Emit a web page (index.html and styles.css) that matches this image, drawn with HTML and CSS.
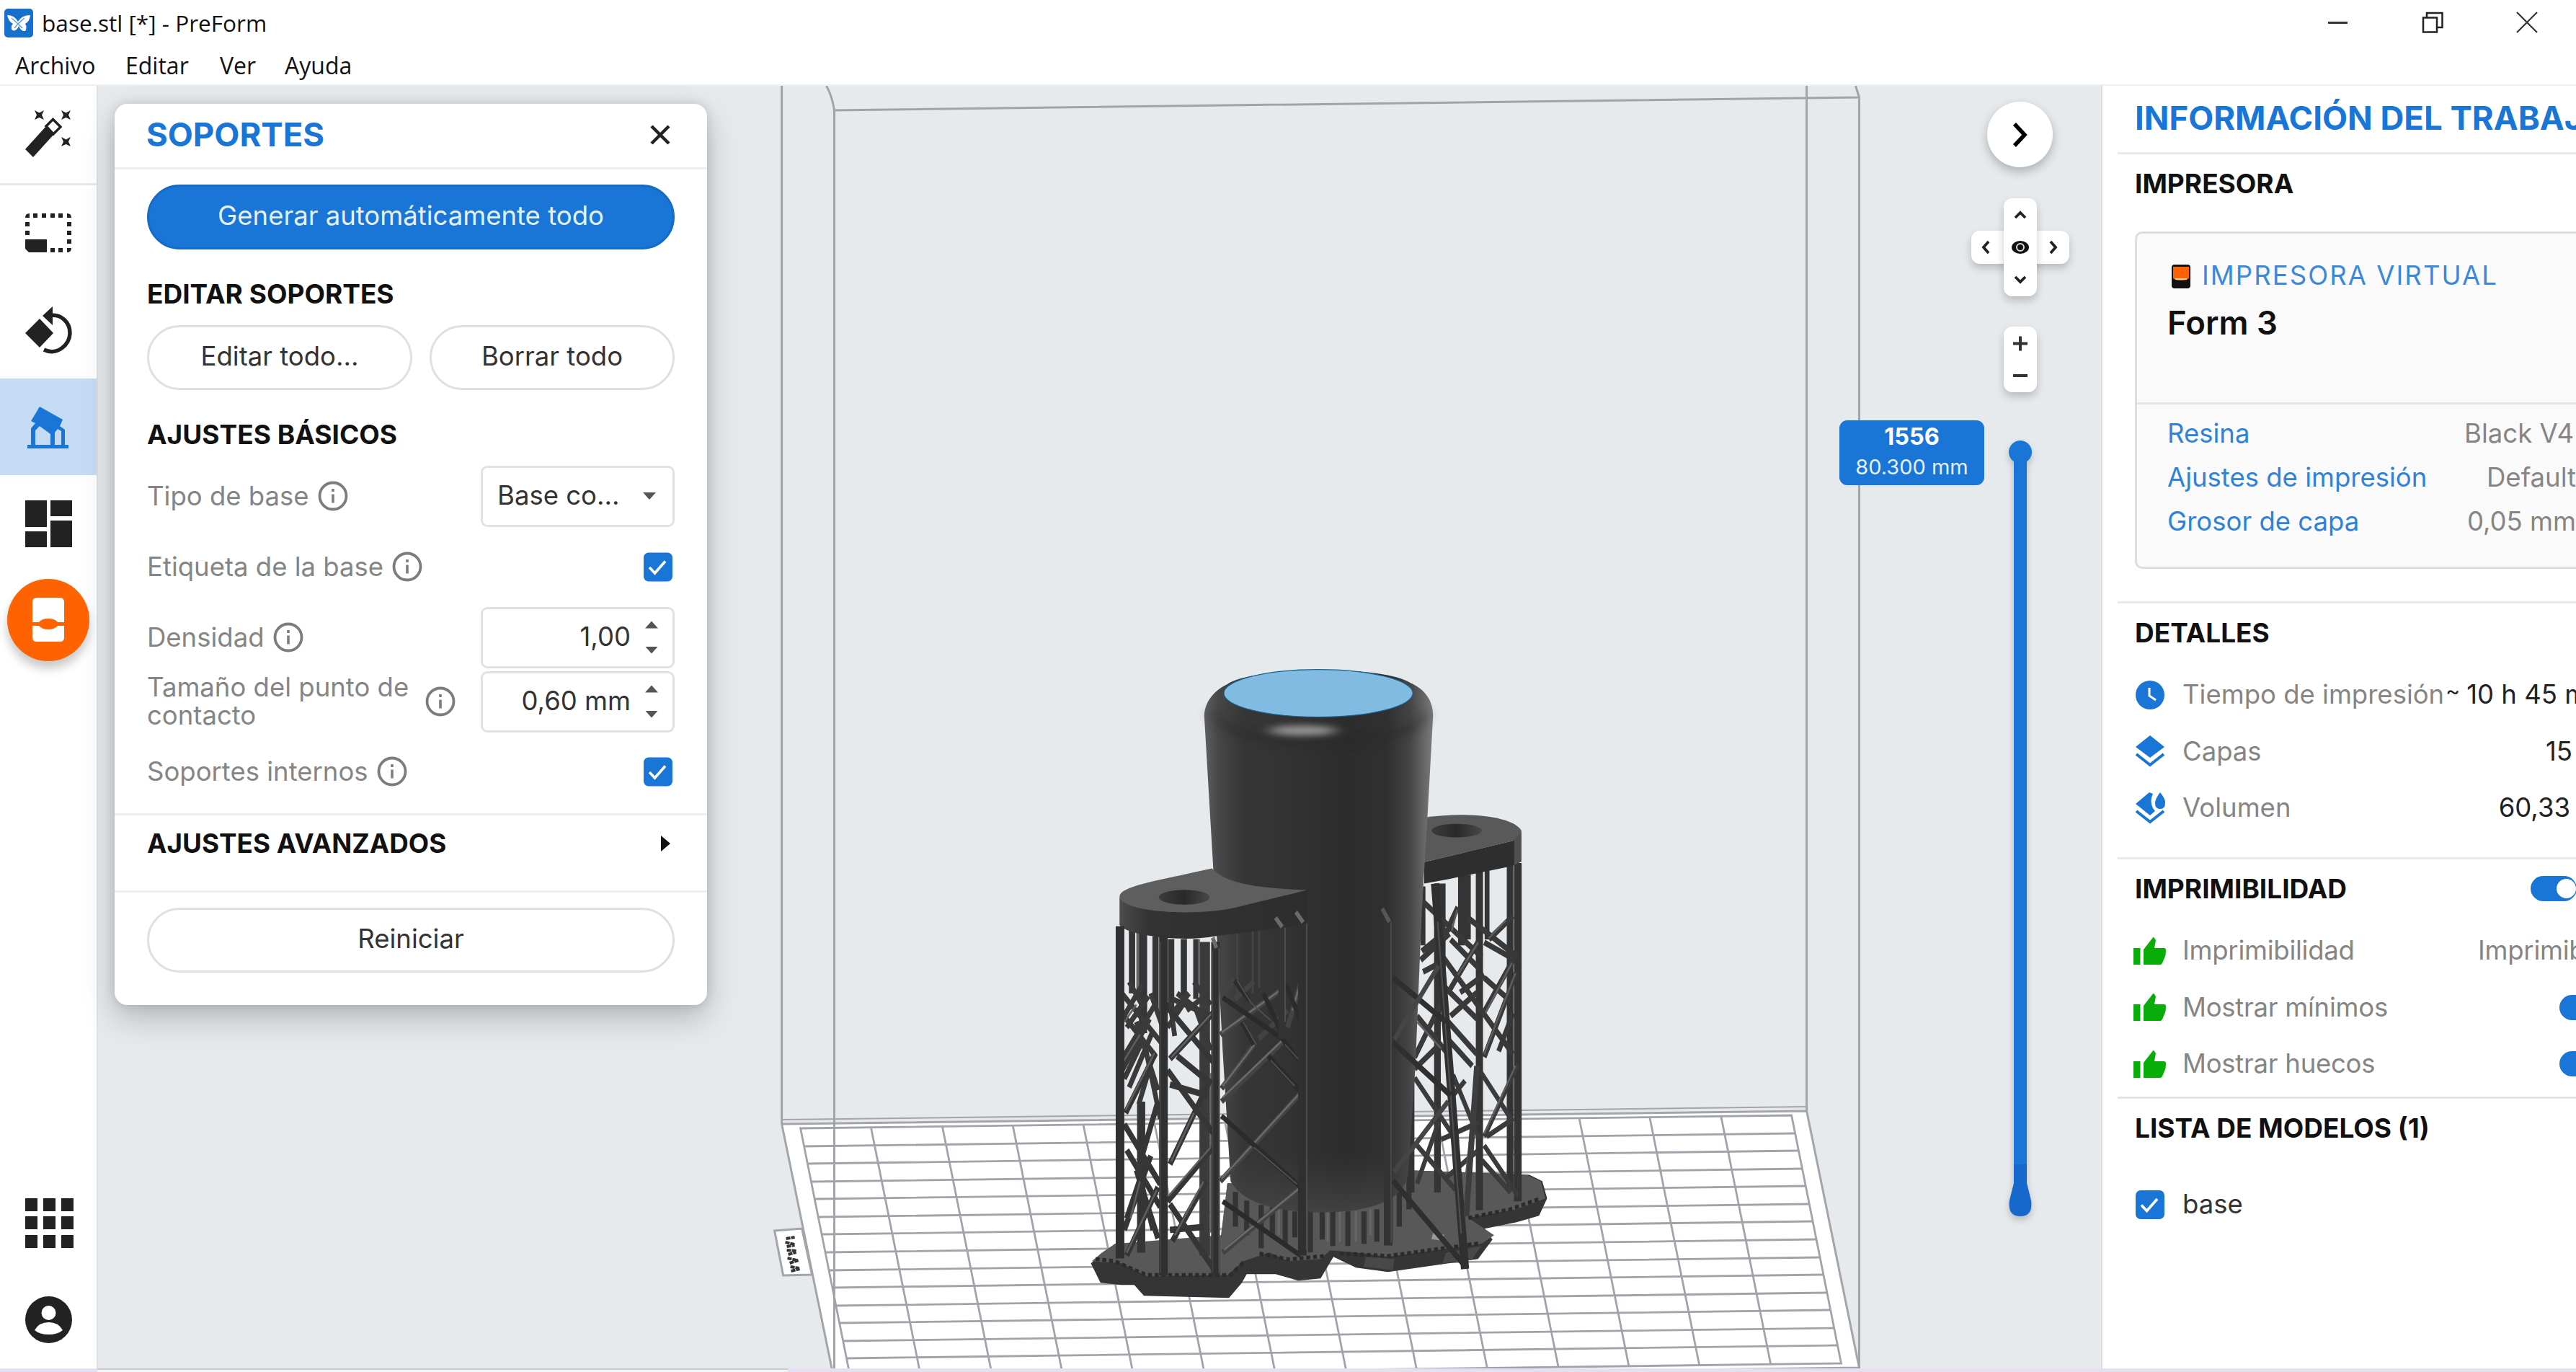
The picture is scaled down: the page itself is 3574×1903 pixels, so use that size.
FILE: index.html
```html
<!DOCTYPE html>
<html lang="es">
<head>
<meta charset="utf-8">
<title>base.stl [*] - PreForm</title>
<link rel="stylesheet" href="styles.css">
</head>
<body>
<svg class="defs" aria-hidden="true">
  <symbol id="info" viewBox="0 0 42 42"><circle cx="21" cy="21" r="18.5" fill="none" stroke="#7d7d7d" stroke-width="3.8"/><path d="M21 18.5v12M21 11v4" stroke="#7d7d7d" stroke-width="3.6"/></symbol>
  <symbol id="check" viewBox="0 0 40 40"><rect width="40" height="40" rx="7" fill="#1976d6"/><path d="M8 20.500l7.500 8L30 12" fill="none" stroke="#fff" stroke-width="3.6"/></symbol>
  <symbol id="thumb" viewBox="0 0 46 40"><path fill="#09ad09" d="M1 16h9.500v23H1zM15 18L27.500 2Q28.500 0 30 2l2 3-2 11h13q3 0 3 3l-.5 7L41 37q-1 2-3 2H15z"/></symbol>
</svg>

<header class="top">
  <div class="titlebar">
    <svg class="logo" viewBox="0 0 40 40"><rect width="40" height="40" rx="5" fill="#1770cc"/><path fill="#fff" d="M4 9q10 0 15 9 5-9 17-9-1 9-7 12 3 5 0 10-6 1-9-7-3 8-9 6-3-5 1-9Q6 18 4 9z"/><path d="M10 13l9 8 9-8M14 27l5-6 6 6" stroke="#5d9fe0" stroke-width="1.500" fill="none"/></svg>
    <span class="title">base.stl [*] - PreForm</span>
    <div class="wincontrols">
      <svg viewBox="0 0 30 30"><path d="M1 15.500h27" stroke="#333" stroke-width="3"/></svg>
      <svg viewBox="0 0 30 30"><path d="M2 8.500h19v20H2zM7 8V2h21.500v20H22" fill="none" stroke="#222" stroke-width="2.500"/></svg>
      <svg viewBox="0 0 30 30"><path d="M1 1l28 28M29 1L1 29" stroke="#333" stroke-width="2.200"/></svg>
    </div>
  </div>
  <nav class="menu"><span class="m1">Archivo</span><span class="m2">Editar</span><span class="m3">Ver</span><span>Ayuda</span></nav>
</header>

<div class="workspace">
  <aside class="tools">
    <div class="tool first"><svg viewBox="0 0 65 65"><path fill="#222" d="M0 53L29 21 40 32 11 64z"/><path d="M29 21l9.500-9.500L49 22 39 32z" fill="#fff" stroke="#222" stroke-width="3.500"/><g fill="#222"><path d="M13-1l6.500 3.500L26-1l-3 6.500 3 6.500-6.500-3L13 12l3-6.500z"/><path d="M50-1l6.500 3.500L63-1l-3 6.500 3 6.500-6.500-3L50 12l3-6.500z"/><path d="M50 36l6.500 3.500L63 36l-3 6.500 3 6.500-6.500-3-6.500 3 3-6.500z"/></g></svg></div>
    <div class="tool"><svg viewBox="0 1 65 65"><g fill="#222"><path d="M0 41h30v18H5l-5-5zM0 11q0-6 6-6v6H0zM11 5h6v6h-6zM23 5h6v6h-6zM35 5h6v6h-6zM46 5h6v6h-6zM58 5q6 0 6 6h-6zM0 17h6v6H0zM0 29h6v6H0zM58 17h6v6h-6zM58 29h6v6h-6zM58 41h6v6h-6zM58 53h6q0 6-6 6zM46 53h6v6h-6zM35 53h6v6h-6z"/></g></svg></div>
    <div class="tool"><svg viewBox="0 0 65 65"><path fill="#222" d="M0 36l20-20 19 20-19 20zM24 12L38-1v26z"/><path d="M36 11.500C50 10 62 21 62 36 62 52 44 68 26 59" fill="none" stroke="#222" stroke-width="5.500"/></svg></div>
    <div class="tool active"><svg viewBox="0 0 65 65"><g fill="#1976d6"><path d="M20 4l32 18-4 9 7 5v21h5v5H3v-5h5V34l6-7-6-3zM14 37v20h21V42L20 31zM41 40v17h9V38l-5-3z" fill-rule="evenodd"/></g></svg></div>
    <div class="tool"><svg viewBox="0 0 65 65"><path fill="#222" d="M0 0h30v37H0zM35 0h30v22H35zM0 43h30v22H0zM35 28h30v37H35z"/></svg></div>
    <div class="tool"><span class="orange"><svg viewBox="0 0 44 62"><path fill="#fff" d="M6 0h32q6 0 6 6v28h-9q-4-5-13-5t-13 5H0V6q0-6 6-6zM0 39h9q4 5 13 5t13-5h9v16q0 6-6 6H6q-6 0-6-6z"/></svg></span></div>
    <div class="grow"></div>
    <div class="tool"><svg viewBox="0 0 65 65"><path fill="#222" d="M0-2h17v18H0zM25-2h17v18H25zM50-2h17v18H50zM0 23h17v18H0zM25 23h17v18H25zM50 23h17v18H50zM0 49h17v18H0zM25 49h17v18H25zM50 49h17v18H50z"/></svg></div>
    <div class="tool user"><svg viewBox="0 0 65 65"><circle cx="32.500" cy="32.500" r="32.500" fill="#222"/><circle cx="32.500" cy="23" r="10" fill="#fff"/><path d="M13 47q6-11 19.500-11T52 47q-7 6-19.500 6T13 47z" fill="#fff"/></svg></div>
  </aside>

  <main class="view">
    <svg class="scene" viewBox="134 119 2783 1779" preserveAspectRatio="none">
      <defs>
        <linearGradient id="body" x1="0" x2="1" y1="0" y2="0"><stop offset="0" stop-color="#606060"/><stop offset=".06" stop-color="#474749"/><stop offset=".17" stop-color="#363637"/><stop offset=".35" stop-color="#333"/><stop offset=".62" stop-color="#2c2c2c"/><stop offset=".8" stop-color="#303031"/><stop offset=".9" stop-color="#454547"/><stop offset="1" stop-color="#7c7c7c"/></linearGradient>
        <linearGradient id="foot" x1="0" x2="0" y1="0" y2="1"><stop offset="0" stop-color="#444" stop-opacity="0"/><stop offset="1" stop-color="#4c4a4b"/></linearGradient>
        <linearGradient id="hole"><stop offset="0" stop-color="#3c3c3c"/><stop offset=".5" stop-color="#292929"/><stop offset="1" stop-color="#484848"/></linearGradient>
        <linearGradient id="edge"><stop offset="0" stop-color="#4c4c4c"/><stop offset=".15" stop-color="#333"/><stop offset="1" stop-color="#2d2d2d"/></linearGradient>
        <filter id="soft" x="-20%" y="-80%" width="140%" height="260%"><feGaussianBlur stdDeviation="22 7"/></filter>
      </defs>
      <!-- build plate -->
      <path d="M1084 1559L2508 1541 2581 1897 1157 1915z" fill="#fff" stroke="#a3a5aa" stroke-width="3"/>
      <path d="M1084 1553L2508 1535" stroke="#a3a5aa" stroke-width="2"/>
      <path d="M1074 1707l38-3 14 64-40 1z" fill="#fff" stroke="#a3a5aa" stroke-width="3"/>
      <path d="M1090 1718l12-2M1089 1723l13 3M1091 1729l11-2M1091 1734l14 1M1093 1740l11-3M1092 1745l13 3M1095 1752l12-4M1096 1757l12 2M1097 1763l12-3" stroke="#333" stroke-width="4" stroke-dasharray="6 1"/>
      <g stroke="#a2a3aa" stroke-width="2.800" fill="none">
        <path d="M1110 1565L2487 1547 2556 1891 1179 1909z"/>
        <path d="M1208 1564l69 344M1307 1562l69 344M1405 1561l69 344M1503 1560l69 344M1602 1559l69 344M1700 1557l69 344M1799 1556l69 344M1897 1555l69 344M1995 1553l69 344M2094 1552l69 344M2192 1551l69 344M2290 1550l69 344M2389 1548l69 344"/>
        <path d="M1115 1590l1377-18M1120 1614l1377-18M1125 1639l1377-18M1130 1663l1377-18M1135 1688l1377-18M1140 1712l1377-18M1145 1737l1377-18M1149 1762l1377-18M1154 1786l1377-18M1159 1811l1377-18M1164 1835l1377-18M1169 1860l1377-18M1174 1884l1377-18"/>
      </g>
      <!-- build volume -->
      <path d="M1084 119V1559M1157 153V1898M2508 119V1541M2581 135V1897M1146 119q8 14 11 34L2581 135l-5-16" fill="none" stroke="#a0a4a8" stroke-width="3"/>

      <!-- raft -->
      <g transform="translate(1480 880) scale(.4464 .5995)">
        <path fill="#353535" d="M75 1455l30 45 65 5h40l30 25 265 5 40-35 15-20h90l70 15 70-5 40-50 70 25 100 10 280-30 45-45-25-25 100-15 70-15 25-40-15-40-40-15-360-10-580 30-20 130-330 10z"/>
        <path fill="#585858" d="M78 1450l32-20 40-20 330-20 20-120 580-30 350 10 45 15 15 40-90 25-150 20 80 40-40 20-290 30-100-10-80-5-30 20-100 5-60-20-80 20-50 32-250 3-80-30z"/>
        <path d="M90 1445l60 5 60 20 40 12h260l40-30M600 1432l90 14 110-8M850 1432l150 6 290-30M1250 1350l130-20 90-24" fill="none" stroke="#2b2b2b" stroke-width="9" stroke-dasharray="12 9"/>
        <path d="M930 1440l90 5-5 26-90-8zM1180 1430l110-15-30 32-90 8z" fill="#484848"/>
        <path d="M1140 1385l35 4-5 14-35-4z" fill="#999"/>
      </g>
      <!-- rear tower -->
      <g transform="translate(1900 1050) scale(.33333 .40816)" fill="none" stroke="#343434">
        <path d="M175 1080V1480M285 430V1480M305 430V800M385 400V640M410 400V620" stroke-width="28"/>
        <path d="M225 440V640M492 380V620" stroke-width="20"/>
        <path d="M460 390V1540" stroke-width="30"/><path d="M588 370V1460" stroke-width="28"/><path d="M620 360V1510" stroke-width="32"/>
        <path d="M210 480l260 200M330 580l40-70M220 660l120-80M225 730l70-30M215 690l120-90M300 670L600 1010M330 800L460 620M340 620l120 100M480 630l130 60M410 545l210 135M500 620l100-80M470 880L600 690M480 1020L615 730M330 900l120 110M340 880l110-80M300 770l150 120M380 800l100-60M480 750l110 80M540 1000l60-130M330 960l100 90M190 1020l120-200M200 880l130 130M190 1060l100-80" stroke-width="20" stroke="#393939"/>
        <path d="M480 1290L620 1045M465 1070L600 1240M480 1320L620 1490M490 1290l110-60M350 1080l110 220M190 1090l180 220M200 1320l160 150M200 1450l90-210M400 1100l-60 60M300 1300l160-60M320 1430l130-90M470 1370l120 110" stroke-width="18" stroke="#3b3b3b"/>
        <path d="M370 740l85-110M480 1010L610 735M500 615l70-60M480 1280l130-230M485 870l110-170M345 590l22-70M390 1520l62-460M200 900l100 90" stroke-width="7" stroke="#5f5f5f"/>
        <path d="M275 430L320 900 400 1740" stroke-width="34" stroke="#303030"/><path d="M286 560l42 460 56 600" stroke-width="6" stroke="#4f4f4f"/>
        <path d="M450 1050L405 1560" stroke-width="24" stroke="#3d3d3d"/>
        <path stroke="none" fill="#595959" d="M235 205c170-20 365-5 400 45v10l-35 25-370 72z"/>
        <path stroke="none" fill="#2e2e2e" d="M230 357l370-72 35-28v98l-35 15-270 45-100 15z"/>
        <path stroke="none" fill="#666" opacity=".6" d="M605 282l30-26v98l-30 14z"/>
        <ellipse cx="365" cy="250" rx="105" ry="23" fill="url(#hole)" stroke="none"/>
      </g>
      <!-- cylinder -->
      <g transform="translate(1480 880) scale(.4464 .5995)">
        <path d="M525 1290v80M560 1310v80M605 1320v100M640 1325v70M680 1330v80M795 1335v65M828 1335v80M875 1335v80M925 1335v75M965 1330v75M1035 1290v80M1065 1240v90M710 1335v60M758 1330v100" stroke="#333" stroke-width="16"/>
        <path d="M812 1335v70M850 1335v70M900 1335v70M945 1330v60M660 1330v60" stroke="#666" stroke-width="7"/>
        <path fill="url(#body)" d="M428 190C428 150 470 125 500 115 580 75 980 70 1070 112 1110 125 1142 150 1140 190L1122 430 1105 640 1085 1000 1062 1250Q1040 1335 790 1337 560 1335 510 1265L485 960 455 530z"/>
        <path fill="url(#foot)" d="M503 1200h563l-4 50q-22 85-272 87-230-2-280-72z" opacity=".7"/>
        <path d="M460 165q40 75 330 75t320-75l10 20q-30 75-330 75t-340-75z" fill="#2b2b2b" opacity=".5" filter="url(#soft)"/>
        <ellipse cx="735" cy="222" rx="105" ry="12" fill="#929292" filter="url(#soft)"/>
        <ellipse cx="783" cy="136" rx="294" ry="55" fill="#81bbe2" stroke="#17658f" stroke-width="2"/>
      </g>
      <!-- front post -->
      <g transform="translate(1900 1050) scale(.33333 .40816)" fill="none" stroke="#333">
        <path d="M80 550V1660" stroke-width="36"/><path d="M92 560V1650" stroke-width="5" stroke="#4c4c4c"/>
        <path d="M55 515l30 45" stroke="#575757" stroke-width="16"/>
        <path d="M100 750L320 900M100 970L340 1150M100 1440L390 1720" stroke-width="20" stroke="#2f2f2f"/>
        <path d="M105 960L290 710M105 1410L330 1170" stroke-width="18" stroke="#454545"/>
      </g>
      <!-- front tower -->
      <g transform="translate(1500 1180) scale(.33333 .39541)" fill="none" stroke="#353535">
        <path d="M212 280V500M310 300V560M375 310V560M428 310V520" stroke-width="26"/><path d="M236 280V500" stroke-width="12" stroke="#666"/>
        <path d="M258 290V640M250 880V1410" stroke-width="34"/><path d="M478 310V520" stroke-width="22"/><path d="M515 320V1420" stroke-width="44" stroke="#3b3b3b"/>
        <path d="M492 310v190M540 780v560" stroke-width="6" stroke="#6a6a6a"/>
        <path d="M650 290V520M715 280V500M742 280V480" stroke-width="8" stroke="#444"/>
        <path d="M160 490l180 190M165 600l90-130M160 560l150 160M165 740l150-210M165 780l120-190M200 460l60 90M290 500l50 120M190 620l90-110M200 830l100-200M230 600l90 240M180 800l80-140M380 520l160 60M380 570l70-70M400 500l120 80M440 560l90-60M470 460l70 80M360 620l80-100M390 650l-20-120M270 700l60 240M300 720l-60 170M480 560l60 140" stroke-width="20" stroke="#3a3a3a"/>
        <path d="M350 540L550 740M370 730L560 560M400 720l130 90M360 770l190 220M370 1100L540 800M370 820l160 40M185 920L310 710M180 960L330 1170M190 1050l140 200M190 1420L320 1180M180 1330l110-260M230 1120l90 240M240 1110l80-230M360 1230L560 1030M370 1240L555 1470M380 1370l140-210M300 1330l-60-200M370 1330l140-10M190 1290l60-150" stroke-width="22" stroke="#363636"/>
        <path d="M185 910L305 710M190 1410L315 1190M365 1210L545 1035M375 1090l95-170M375 725L545 570M180 600l50-60M165 755l80-110M205 1290l40-130M390 1350l120-190" stroke-width="7" stroke="#606060"/>
        <path d="M580 645L830 490M585 880L840 670M585 835L720 680M580 1160L915 850M590 1410L910 1185M860 620l60-170M590 490l50-35M640 520l80-60M740 660l120-100" stroke-width="20" stroke="#434343"/>
        <path d="M585 638L828 490M590 865L835 668M585 1150L912 850M595 1400L908 1185M590 825L722 680M880 560l38-110" stroke-width="7" stroke="#6b6b6b"/>
        <path d="M590 515L840 660 920 750M585 930L915 1180M590 1230L915 1420M640 455l60 70M855 470l70 150M670 600l50 80M780 720l130 120M760 500l80 150" stroke-width="18" stroke="#2b2b2b"/>
        <path d="M650 455l60 80 80 60M675 600l55 80M850 680l65 60M720 1040l180 130M790 735l100 90" stroke-width="5" stroke="#505050"/>
        <path stroke="none" fill="url(#edge)" d="M160 160c20 60 340 65 480 38l302-60 3 120-385 42C400 325 170 290 160 260z"/>
        <path stroke="none" fill="#5e5e5e" d="M160 160C165 125 300 108 545 62 600 110 700 130 942 138L640 200C500 228 175 222 160 160z"/>
        <ellipse cx="430" cy="163" rx="106" ry="26" fill="url(#hole)" stroke="none"/>
        <path d="M835 260V660" stroke-width="26" stroke="#333"/><path d="M162 265V1430M343 300V1490M560 320V1490M922 250V1420" stroke-width="36" stroke="#303030"/>
        <path d="M940 255V1400M850 270V600M575 340V1480" stroke-width="5" stroke="#535353"/><path d="M330 320V1480M548 350V1480" stroke-width="5" stroke="#444"/>
        <path d="M810 235l28 32M895 215l30 36M548 305l16 36" stroke="#6a6a6a" stroke-width="16"/>
      </g>
    </svg>

    <section class="panel">
      <header class="panel-head"><h2>SOPORTES</h2><svg viewBox="0 0 28 28"><path d="M2 2l24 24M26 2L2 26" stroke="#222" stroke-width="4.500"/></svg></header>
      <div class="panel-body">
        <button class="btn primary">Generar automáticamente todo</button>
        <h3>EDITAR SOPORTES</h3>
        <div class="pair"><button class="btn">Editar todo...</button><button class="btn">Borrar todo</button></div>
        <h3 class="basic">AJUSTES BÁSICOS</h3>
        <div class="field"><label>Tipo de base</label><svg class="info"><use href="#info"/></svg><div class="box select"><span>Base co...</span><i class="down"></i></div></div>
        <div class="field r2"><label>Etiqueta de la base</label><svg class="info"><use href="#info"/></svg><svg class="check"><use href="#check"/></svg></div>
        <div class="field r3"><label>Densidad</label><svg class="info"><use href="#info"/></svg><div class="box spin"><span>1,00</span><em><i class="up"></i><i class="down"></i></em></div></div>
        <div class="field r4"><label>Tamaño del punto de<br>contacto</label><svg class="info far"><use href="#info"/></svg><div class="box spin"><span>0,60 mm</span><em><i class="up"></i><i class="down"></i></em></div></div>
        <div class="field r5"><label>Soportes internos</label><svg class="info"><use href="#info"/></svg><svg class="check"><use href="#check"/></svg></div>
      </div>
      <div class="advanced"><h3>AJUSTES AVANZADOS</h3><i class="right"></i></div>
      <div class="panel-foot"><button class="btn">Reiniciar</button></div>
    </section>

    <div class="nav">
      <button class="round"><svg viewBox="0 0 22 36"><path d="M3 3l14 15L3 33" fill="none" stroke="#000" stroke-width="5.500"/></svg></button>
      <div class="cross">
        <span class="h"></span><span class="v"></span>
        <svg viewBox="0 0 136 136"><g fill="none" stroke="#222" stroke-width="3.800"><path d="M61 27l7-7 7 7M61 109l7 7 7-7M24 60l-7 8 7 8M110 60l7 8-7 8"/></g><ellipse cx="68" cy="68" rx="12" ry="9" fill="#111"/><circle cx="68" cy="68" r="5" fill="none" stroke="#ddd" stroke-width="2"/></svg>
      </div>
      <div class="zoom"><svg viewBox="0 0 46 91"><path d="M13 23.500h20M23 13.500v20M13 68h20" stroke="#333" stroke-width="4"/></svg></div>
      <svg class="slider" viewBox="0 0 50 1100"><path d="M16 26h18v990H16z" fill="#1976d6"/><circle cx="25" cy="26" r="16" fill="#1976d6"/><path d="M16 1014h18v26l6 24q3 22-15 22t-15-22l6-24z" fill="#1668cd"/></svg>
      <div class="layer"><b>1556</b><span>80.300 mm</span></div>
    </div>
  </main>

  <aside class="job">
    <h2>INFORMACIÓN DEL TRABAJO</h2>
    <section class="printer">
      <h3>IMPRESORA</h3>
      <div class="card">
        <div class="card-top">
          <p class="virtual"><svg viewBox="0 0 26 33"><rect width="26" height="33" rx="4" fill="#111"/><path d="M2 3h22v16q-3 3-11 3T2 19z" fill="#ff6200"/><path d="M5 21h16v-2H5z" fill="#ffd0a8"/></svg>IMPRESORA VIRTUAL</p>
          <p class="model">Form 3</p>
        </div>
        <div class="card-rows">
          <p><a>Resina</a><span class="s1">Black V4</span></p>
          <p><a>Ajustes de impresión</a><span>Default</span></p>
          <p><a>Grosor de capa</a><span>0,05 mm</span></p>
        </div>
      </div>
    </section>
    <section class="details">
      <h3>DETALLES</h3>
      <p class="line"><svg viewBox="0 0 42 46"><circle cx="21" cy="23" r="20" fill="#1976d6"/><path d="M20 13v11l9 6" fill="none" stroke="#fff" stroke-width="3"/></svg><span>Tiempo de impresión</span><b class="time"><i>~</i>10 h 45 min</b></p>
      <p class="line"><svg viewBox="0 0 42 46"><path d="M21 1l20 16-20 15L1 17z" fill="#1976d6"/><path d="M2 27l19 15 19-15" fill="none" stroke="#1976d6" stroke-width="4"/></svg><span>Capas</span><b class="end1">15</b></p>
      <p class="line"><svg viewBox="0 0 42 46"><path d="M20 1l5 2q-5 10 0 20l3 4-7 6L1 17z" fill="#1976d6"/><path d="M2 27l19 15 19-15" fill="none" stroke="#1976d6" stroke-width="4"/><path d="M35 1q8 10 7 15 0 8-7 8t-7-8q0-6 7-15z" fill="#1976d6"/></svg><span>Volumen</span><b class="end2">60,33</b></p>
    </section>
    <section class="printability">
      <h3>IMPRIMIBILIDAD<i class="toggle t0"></i></h3>
      <p class="line"><svg><use href="#thumb"/></svg><span>Imprimibilidad</span><em>Imprimible</em></p>
      <p class="line"><svg><use href="#thumb"/></svg><span>Mostrar mínimos</span><i class="toggle"></i></p>
      <p class="line"><svg><use href="#thumb"/></svg><span>Mostrar huecos</span><i class="toggle"></i></p>
    </section>
    <section class="models">
      <h3>LISTA DE MODELOS (1)</h3>
      <p class="line item"><svg><use href="#check"/></svg><span>base</span></p>
    </section>
  </aside>
</div>
<footer class="strip"><span class="a"></span><span class="b"></span><span class="c"></span></footer>
</body>
</html>
```
FILE: styles.css
```css
* { box-sizing: border-box; }
html, body { height: 100%; }
body {
  margin: 0;
  display: flex;
  flex-direction: column;
  overflow: hidden;
  background: #fff;
  color: #222;
  font: 400 36.5px/1.2 Inter, "Liberation Sans", sans-serif;
}
h2, h3, p { margin: 0; white-space: nowrap; }
h2 { font-size: 45.5px; font-weight: 700; color: #1976d6; }
h3 { font-size: 37px; font-weight: 700; color: #111; }
button { font: inherit; color: #333; padding: 0; }
i, em { font-style: normal; }
.defs { position: absolute; width: 0; height: 0; }

/* window chrome */
.top { flex: none; height: 119px; border-bottom: 2px solid #f0f0f0; font-family: "Open Sans", "Noto Sans", sans-serif; font-size: 32px; color: #111; }
.titlebar { display: flex; align-items: center; height: 64px; padding: 0 53px 0 6px; }
.logo { width: 40px; height: 40px; }
.title { margin: 0 0 0 12px; font-size: 31.600px; }
.wincontrols { display: flex; gap: 101px; margin: -2px 0 0 auto; }
.wincontrols svg { width: 30px; height: 30px; overflow: visible; }
.menu { display: flex; height: 55px; align-items: center; padding-left: 21px; }
.m1 { width: 153px; } .m2 { width: 131px; } .m3 { width: 90px; }

.workspace { flex: 1; min-height: 0; display: flex; }

/* tool rail */
.tools { flex: none; width: 136px; display: flex; flex-direction: column; background: #fff; border-right: 2px solid #dcdfe4; }
.tool { height: 134px; display: flex; align-items: center; justify-content: center; }
.tool svg { width: 65px; height: 65px; overflow: visible; }
.tool.first { height: 138px; border-bottom: 3px solid #e8e8ea; }
.tool.active { background: #c5dbf4; }
.tool.user { margin-bottom: 1px; }
.orange { width: 114px; height: 114px; border-radius: 50%; background: #ff6200; display: flex; align-items: center; justify-content: center; box-shadow: 0 10px 14px rgba(0,0,0,.22); }
.tool .orange svg { width: 44px; height: 64px; }
.grow { flex: 1; }

/* viewport */
.view { position: relative; flex: 1; min-width: 0; background: #e6eaed; }
.scene { position: absolute; left: 0; top: 0; width: 100%; height: 100%; display: block; }

.panel {
  position: absolute; left: 23px; top: 25px; width: 822px; height: 1250px;
  background: #fff; border-radius: 18px;
  box-shadow: 0 18px 44px rgba(0,0,0,.22), 0 0 16px rgba(0,0,0,.12);
}
.panel-head { height: 91px; padding: 0 51px 2px 44px; display: flex; align-items: center; justify-content: space-between; border-bottom: 3px solid #efefef; }
.panel-head svg { width: 28px; height: 28px; }
.panel-body { padding: 21px 45px 16px; }
.btn { width: 100%; height: 90px; border: 3px solid #e0e0e0; border-radius: 45px; background: #fff; display: flex; align-items: center; justify-content: center; padding-bottom: 2px; }
.btn.primary { background: #1976d6; border-color: #166bc4; color: #e4f0fc; }
.panel-body h3 { height: 105px; line-height: 90px; padding-top: 17px; }
.pair { display: grid; grid-template-columns: 368px 340px; gap: 24px; }
.field { height: 84px; display: flex; align-items: center; color: #858585; }
.field label { line-height: 39px; }
.field .box, .field .check { margin-left: auto; }
.info { width: 42px; height: 42px; margin-left: 12px; }
.info.far { margin-left: 23px; }
.check { width: 40px; height: 41px; margin-right: 3px; }
.r2 { margin-top: 14px; } .r3 { margin-top: 14px; } .r4 { margin-top: 5px; } .r5 { margin-top: 13px; }
.box { width: 269px; height: 85px; border: 3px solid #e2e2e2; border-radius: 9px; display: flex; align-items: center; color: #333; }
.select { justify-content: space-between; padding: 0 23px 0 20px; }
.spin { justify-content: flex-end; padding-right: 20px; gap: 20px; }
.spin em { display: flex; flex-direction: column; gap: 25px; }
.up, .down { display: block; width: 18px; height: 10px; background: #555; }
.up { clip-path: polygon(50% 0, 100% 100%, 0 100%); }
.down { clip-path: polygon(0 0, 100% 0, 50% 100%); }
.right { width: 13px; height: 22px; background: #111; clip-path: polygon(0 0, 100% 50%, 0 100%); }
.advanced { height: 110px; border: solid #efefef; border-width: 3px 0; display: flex; align-items: center; justify-content: space-between; padding: 0 51px 26px 45px; }
.advanced h3 { font-size: 36.800px; }
.panel-foot { padding: 21px 45px; }

/* camera controls */
.nav { position: absolute; right: 0; top: 0; width: 363px; height: 100%; display: flex; flex-direction: column; align-items: center; padding: 22px 0 0 138px; }
.round { width: 91px; height: 91px; border: 0; border-radius: 50%; background: #fff; display: flex; align-items: center; justify-content: center; box-shadow: 0 6px 14px rgba(0,0,0,.25); }
.round svg { width: 22px; height: 36px; }
.cross { position: relative; width: 136px; height: 136px; margin-top: 43px; }
.cross span { position: absolute; background: #fff; border-radius: 12px; box-shadow: 0 6px 12px rgba(0,0,0,.2); }
.cross .h { left: 0; right: 0; top: 45px; height: 46px; }
.cross .v { top: 0; bottom: 0; left: 45px; width: 46px; }
.cross svg { position: absolute; left: 0; top: 0; width: 136px; height: 136px; }
.zoom { width: 46px; height: 91px; margin-top: 42px; background: #fff; border-radius: 12px; box-shadow: 0 6px 12px rgba(0,0,0,.2); }
.zoom svg { display: block; width: 46px; height: 91px; }
.slider { width: 50px; height: 1100px; margin-top: 57px; filter: drop-shadow(0 5px 5px rgba(0,0,0,.2)); }
.layer { position: absolute; left: 0; top: 464px; width: 201px; height: 90px; border-radius: 11px; background: #1976d6; color: #e4f0fc; text-align: center; display: flex; flex-direction: column; font-size: 29px; line-height: 42px; padding-top: 2px; }
.layer b { font-size: 32.500px; color: #fff; }

/* job information */
.job { flex: none; width: 659px; overflow: hidden; background: #fff; border-left: 2px solid #dcdfe1; padding-left: 21px; }
.job > h2 { height: 95px; line-height: 90px; padding-left: 24px; border-bottom: 3px solid #e9e9e9; }
.job h3 { padding-left: 24px; }
.printer { height: 623px; border-bottom: 3px solid #e9e9e9; }
.printer h3 { height: 107px; line-height: 81px; }
.card { width: 700px; height: 468px; margin-left: 24px; border: 3px solid #dedede; border-radius: 10px; background: #fafafa; }
.card-top { height: 237px; border-bottom: 3px solid #e6e6e6; padding: 29px 0 0 17px; }
.virtual { display: flex; align-items: center; height: 60px; color: #3b89d9; letter-spacing: 2.050px; margin-left: 8px; padding-left: 23px; }
.virtual svg { width: 26px; height: 33px; margin-right: 16px; }
.model { font-size: 45.500px; font-weight: 600; color: #111; line-height: 60px; height: 60px; margin-top: 5px; padding-left: 25px; }
.card-rows { padding: 10px 0 0 42px; width: 609px; }
.card-rows p { height: 61px; display: flex; align-items: center; justify-content: space-between; }
.card-rows a { color: #2f82d8; }
.card-rows span { color: #858585; }
.card-rows .s1 { margin-right: 3px; }
.details { height: 355px; border-bottom: 3px solid #e9e9e9; }
.details h3, .printability h3 { height: 88px; line-height: 82px; }
.line { height: 78.300px; display: flex; align-items: center; color: #858585; padding-left: 24px; width: 637px; }
.line svg { flex: none; width: 42px; height: 46px; margin-right: 24px; overflow: visible; }
.line b { font-weight: 400; color: #222; margin-left: auto; }
.line .time { margin-left: 2px; }
.time i { display: inline-block; font-size: 30px; width: 29px; transform: translateY(-7px); }
.line .end1 { margin-right: 6px; }
.line .end2 { margin-right: 9px; }
.printability { height: 332px; border-bottom: 3px solid #e4e4e4; }
.printability h3 { position: relative; display: flex; align-items: center; width: 637px; line-height: 1; padding-bottom: 8px; }
.printability .line { letter-spacing: -.25px; }
.printability .line svg { width: 46px; height: 40px; margin-left: -3px; margin-right: 23px; }
.line em { margin-left: auto; width: 137px; }
.toggle { flex: none; width: 64px; height: 35px; border-radius: 18px; background: #1976d6; margin-left: auto; margin-right: -40px; }
.toggle.t0 { margin-right: 0; position: relative; }
.toggle.t0::after { content: ""; position: absolute; left: 36px; top: 4px; width: 27px; height: 27px; border-radius: 50%; background: #fff; }
.models h3 { height: 106px; line-height: 82px; }
.models .item { color: #333; height: 82px; }
.item svg { width: 40px; height: 40px; margin: 0 25px 0 1px; }

.strip { flex: none; height: 5px; display: flex; }
.strip .a { width: 135px; background: #e4e0f2; }
.strip .b { width: 958px; background: #f4f4f4; border-top: 2px solid #c9cacc; }
.strip .c { flex: 1; background: #e4e0f0; }
```
